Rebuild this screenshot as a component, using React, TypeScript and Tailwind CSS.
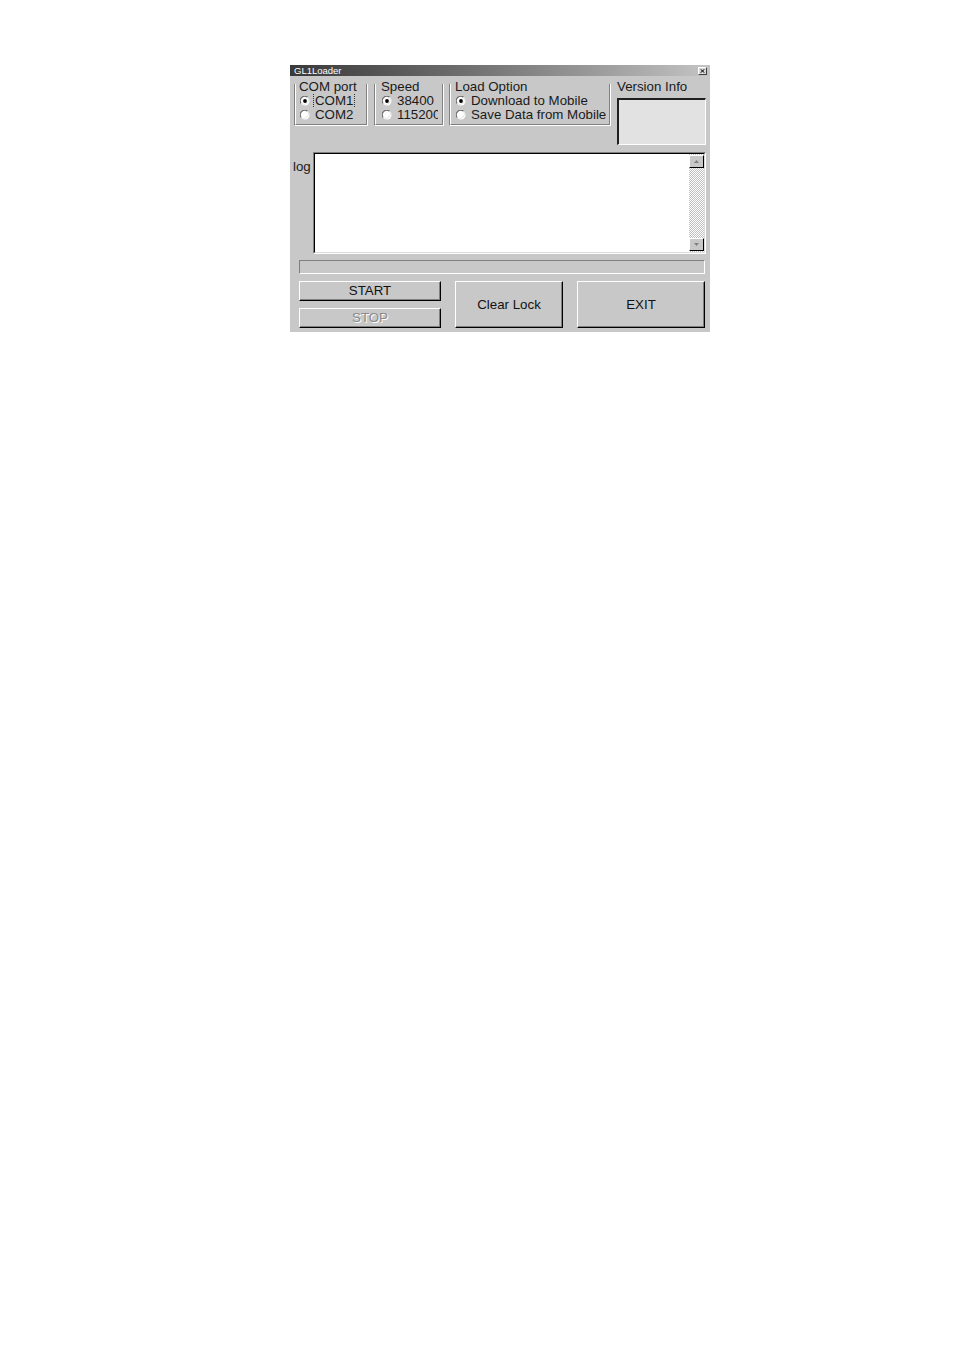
import React from "react";

function Radio({ checked }: { checked?: boolean }) {
  return (
    <svg width="10" height="10" viewBox="0 0 10 10" className="shrink-0">
      <circle cx="5" cy="5" r="4.5" fill="#ffffff" />
      <path d="M1.2 7.5 A4.5 4.5 0 0 1 7.5 1.2" fill="none" stroke="#6e6e6e" strokeWidth="1.2" />
      <path d="M7.5 1.2 A4.5 4.5 0 0 1 1.2 7.5" fill="none" stroke="#e6e6e6" strokeWidth="1" />
      {checked && <circle cx="5" cy="5" r="1.9" fill="#000000" />}
    </svg>
  );
}

type Item = { text: string; checked?: boolean; focus?: boolean; clip?: boolean };

function Group({
  width,
  label,
  labelPad,
  radioPad,
  items,
}: {
  width: string;
  label: string;
  labelPad: string;
  radioPad: string;
  items: Item[];
}) {
  return (
    <div className={`${width} mt-[5px] h-[42px] border-l border-r border-b border-l-[#808080] border-r-white border-b-white`}>
      <div className="h-full flex flex-col border-l border-r border-b border-l-white border-r-[#808080] border-b-[#808080]">
        <div className={`-mt-[5px] leading-[15px] ${labelPad} whitespace-nowrap`}>{label}</div>
        {items.map((it, i) => (
          <div key={i} className={`flex items-center h-[14px] leading-[14px] ${radioPad} gap-[5px] overflow-hidden whitespace-nowrap`}>
            <Radio checked={it.checked} />
            <span
              className={
                it.focus
                  ? "outline outline-1 outline-dotted outline-[#333] -ml-[1px] px-[1px]"
                  : it.clip
                  ? "block w-[41px] shrink-0 overflow-hidden"
                  : ""
              }
            >
              {it.text}
            </span>
          </div>
        ))}
      </div>
    </div>
  );
}

function Btn({ className, children, disabled }: { className: string; children: React.ReactNode; disabled?: boolean }) {
  return (
    <div
      className={`${className} flex items-center justify-center border border-t-white border-l-white border-b-black border-r-black shadow-[inset_-1px_-1px_0_#808080] ${
        disabled ? "text-[#8a8a8a] [text-shadow:1px_1px_0_#ffffff]" : "text-[#111]"
      }`}
    >
      {children}
    </div>
  );
}

export default function App() {
  return (
    <div className="w-[954px] h-[1351px] bg-white pt-[65px] pl-[290px]" style={{ fontFamily: '"Liberation Sans", Arial, sans-serif' }}>
      <div className="w-[420px] h-[267px] bg-[#c8c8c8] text-[13.3px] text-[#1a1a1a] flex flex-col">
        {/* title bar */}
        <div className="h-[11px] flex items-center justify-between bg-gradient-to-r from-[#3a3a3a] via-[#7a7a7a] to-[#c4c4c4]">
          <span className="pl-[4px] text-[9.5px] leading-[11px] text-white">GL1Loader</span>
          <div className="mr-[3px] w-[9px] h-[8px] bg-[#d8d8d8] border border-t-white border-l-white border-b-[#404040] border-r-[#404040] flex items-center justify-center">
            <svg width="5" height="4" viewBox="0 0 5 4">
              <path d="M0.5 0.2 L4.5 3.8 M4.5 0.2 L0.5 3.8" stroke="#000" strokeWidth="1" />
            </svg>
          </div>
        </div>

        {/* top row */}
        <div className="mt-[3px] flex items-start">
          <div className="ml-[4px]">
            <Group
              width="w-[74px]"
              label="COM port"
              labelPad="pl-[3px]"
              radioPad="pl-[4px]"
              items={[
                { text: "COM1", checked: true, focus: true },
                { text: "COM2" },
              ]}
            />
          </div>
          <div className="ml-[6px]">
            <Group
              width="w-[70px]"
              label="Speed"
              labelPad="pl-[5px]"
              radioPad="pl-[6px]"
              items={[{ text: "38400", checked: true }, { text: "115200", clip: true }]}
            />
          </div>
          <div className="ml-[5px]">
            <Group
              width="w-[162px]"
              label="Load Option"
              labelPad="pl-[4px]"
              radioPad="pl-[5px]"
              items={[{ text: "Download to Mobile", checked: true }, { text: "Save Data from Mobile" }]}
            />
          </div>
          <div className="ml-[6px] w-[89px]">
            <div className="leading-[15px] whitespace-nowrap">Version Info</div>
            <div className="mt-[4px] h-[47px] border-t-2 border-l-2 border-b border-r border-t-[#202020] border-l-[#202020] border-b-white border-r-white bg-[#e2e2e2]" />
          </div>
        </div>

        {/* log row */}
        <div className="mt-[7px] flex">
          <div className="w-[23px] pl-[3px] pt-[7px] leading-[15px]">log</div>
          <div className="w-[393px] h-[102px] border border-t-[#808080] border-l-[#808080] border-b-white border-r-white">
            <div className="h-full border border-t-black border-l-black border-b-[#dcdcdc] border-r-[#dcdcdc] bg-white flex justify-end">
              <div className="w-[15px] h-full flex flex-col bg-[repeating-conic-gradient(#ffffff_0%_25%,#c0c0c0_0%_50%)] bg-[length:2px_2px]">
                <div className="h-[13px] mt-[1px] bg-[#c8c8c8] border border-t-white border-l-white border-b-black border-r-black flex items-center justify-center">
                  <svg width="5" height="3" viewBox="0 0 5 3">
                    <path d="M2.5 0 L5 3 L0 3 Z" fill="#808080" />
                  </svg>
                </div>
                <div className="flex-1" />
                <div className="h-[13px] mb-[1px] bg-[#c8c8c8] border border-t-white border-l-white border-b-black border-r-black flex items-center justify-center">
                  <svg width="5" height="3" viewBox="0 0 5 3">
                    <path d="M0 0 L5 0 L2.5 3 Z" fill="#808080" />
                  </svg>
                </div>
              </div>
            </div>
          </div>
        </div>

        {/* progress bar */}
        <div className="mt-[6px] ml-[9px] w-[406px] h-[14px] border border-t-[#808080] border-l-[#808080] border-b-white border-r-white" />

        {/* buttons */}
        <div className="mt-[7px] flex items-start">
          <div className="ml-[9px] w-[142px] flex flex-col gap-[7px]">
            <Btn className="h-[20px]">START</Btn>
            <Btn className="h-[20px]" disabled>
              STOP
            </Btn>
          </div>
          <Btn className="ml-[14px] w-[108px] h-[47px]">Clear Lock</Btn>
          <Btn className="ml-[14px] w-[128px] h-[47px]">EXIT</Btn>
        </div>
      </div>
    </div>
  );
}
